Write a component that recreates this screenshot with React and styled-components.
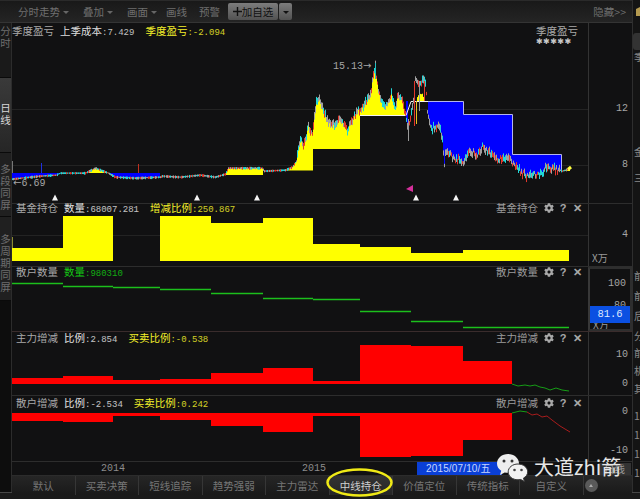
import styled, { createGlobalStyle } from "styled-components";
import { FaCog } from "react-icons/fa";

const CJK = `"Noto Sans CJK SC", "Liberation Sans", sans-serif`;
const MONO = `"Liberation Mono", "Noto Sans CJK SC", monospace`;

const GlobalStyle = createGlobalStyle`
  html, body { margin: 0; padding: 0; background: #111; }
`;

const Page = styled.div`
  position: relative;
  width: 640px;
  height: 499px;
  overflow: hidden;
  display: flex;
  flex-direction: column;
  background: #111112;
  font-family: ${CJK};
  font-size: 10.5px;
  line-height: 12px;
`;

const Toolbar = styled.div`
  flex: 0 0 23px;
  box-sizing: border-box;
  display: flex;
  align-items: center;
  gap: 12px;
  padding: 0 6px 0 18px;
  width: 632px;
  color: #6f6f6f;
  border-top: 1px solid #2a2a2a;
  border-bottom: 1px solid #343434;
  background: linear-gradient(#191919, #242424);
`;

const ToolItem = styled.span`
  display: flex;
  align-items: center;
  margin-left: ${(p) => p.$ml || 0}px;
`;

const Caret = styled.i`
  width: 0;
  height: 0;
  margin: 1px 2px 0 3px;
  border-left: 3px solid transparent;
  border-right: 3px solid transparent;
  border-top: 3px solid ${(p) => p.$color || "#666"};
`;

const AddButton = styled.span`
  width: 50px;
  height: 17px;
  margin-left: -4px;
  display: flex;
  align-items: center;
  justify-content: center;
  font-size: 10.5px;
  color: #111;
  border-radius: 2px;
  background: linear-gradient(#7c7c7c, #525252);
`;

const DropButton = styled(AddButton)`
  width: 13px;
  margin-left: -11px;
`;

const Spacer = styled.span`
  flex: 1;
`;

const Middle = styled.div`
  flex: 1;
  display: flex;
  min-height: 0;
`;

const LeftRail = styled.div`
  flex: 0 0 12px;
  display: flex;
  flex-direction: column;
  border-right: 1px solid #2c2c2c;
  box-sizing: border-box;
  background: #0d0d0d;
`;

const RailTab = styled.div`
  flex: 0 0 ${(p) => p.$h}px;
  box-sizing: border-box;
  width: 11px;
  overflow: hidden;
  display: flex;
  flex-direction: column;
  align-items: center;
  padding-top: ${(p) => p.$pad || 0}px;
  color: ${(p) => (p.$active ? "#d8d8d8" : "#6e6e6e")};
  background: ${(p) => p.$bg || "transparent"};
  border-bottom: 1px solid #0a0a0a;
`;

const Center = styled.div`
  flex: 0 0 620px;
  display: flex;
  flex-direction: column;
`;

const Pane = styled.div`
  flex: 0 0 ${(p) => p.$h}px;
  display: flex;
  box-sizing: border-box;
  border-bottom: 1px solid ${(p) => p.$line || "#2d2d2d"};
`;

const Plot = styled.div`
  position: relative;
  flex: 0 0 576px;
`;

const PlotSvg = styled.svg`
  display: block;
  width: 576px;
  height: 100%;
`;

const Axis = styled.div`
  position: relative;
  flex: 0 0 44px;
  box-sizing: border-box;
  overflow: hidden;
  border: ${(p) => (p.$boxed ? "2px solid #2e2e2e" : "")};
  border-left: ${(p) => (p.$boxed ? "2px solid #383838" : "1px solid #333")};
`;

const Tick = styled.span`
  position: absolute;
  top: ${(p) => p.$y}px;
  right: 4px;
  font-family: ${MONO};
  font-size: 10px;
  color: #a5a5a5;
`;

const Unit = styled.span`
  position: absolute;
  top: ${(p) => p.$y}px;
  left: 3px;
  font-size: 10px;
  color: #9a9a9a;
`;

const Badge = styled.span`
  position: absolute;
  top: ${(p) => p.$y}px;
  left: 0;
  right: 0;
  height: 17px;
  line-height: 17px;
  text-align: center;
  font-family: ${MONO};
  font-size: 10.5px;
  color: #dfe8ff;
  background: #0b50e2;
`;

const Readouts = styled.div`
  position: absolute;
  top: ${(p) => p.$top}px;
  left: ${(p) => p.$left}px;
  display: flex;
  gap: 11px;
  white-space: nowrap;
`;

const Readout = styled.span`
  color: ${(p) => p.$color || "#c4c4c4"};
`;

const Num = styled.span`
  font-family: ${MONO};
  font-size: 9px;
  opacity: 0.85;
`;

const Name = styled(Readout)`
  color: #a9a9a9;
  margin-right: -5px;
`;

const PaneTools = styled.div`
  position: absolute;
  top: ${(p) => p.$top}px;
  right: 4px;
  display: flex;
  align-items: center;
  color: #9c9c9c;
`;

const ToolIcon = styled.span`
  width: 14px;
  display: flex;
  justify-content: center;
  font-family: "Liberation Sans", sans-serif;
  font-size: 11px;
  font-weight: bold;
  color: #a8a8a8;
`;

const ToolName = styled.span`
  margin-right: 4px;
`;

const CornerNote = styled.div`
  position: absolute;
  top: 2px;
  left: 524px;
  color: #a9a9a9;
`;

const Stars = styled.div`
  font-family: "DejaVu Sans", sans-serif;
  font-size: 8px;
  line-height: 9px;
  letter-spacing: 0.4px;
  color: #c8c8c8;
  white-space: nowrap;
`;

const ChartText = styled.span`
  position: absolute;
  left: ${(p) => p.$x}px;
  top: ${(p) => p.$y}px;
  font-family: ${MONO};
  font-size: 10px;
  color: #a6a6a6;
  white-space: nowrap;
`;

const Arrow = styled.span`
  font-family: "DejaVu Sans", sans-serif;
  font-size: 10px;
`;

const DateRow = styled.div`
  position: relative;
  flex: 0 0 14px;
  border-bottom: 1px solid #2c2c2c;
  box-sizing: border-box;
`;

const DateLabel = styled.span`
  position: absolute;
  left: ${(p) => p.$x}px;
  top: 1px;
  font-family: ${MONO};
  font-size: 10px;
  color: #8c8c8c;
`;

const Cursor = styled.span`
  position: absolute;
  left: 405px;
  top: 0;
  width: 85px;
  height: 13px;
  padding-left: 9px;
  box-sizing: border-box;
  line-height: 13px;
  font-family: "Liberation Sans", "Noto Sans CJK SC", sans-serif;
  font-size: 10px;
  letter-spacing: 0.15px;
  color: #c6d6ff;
  background: #0a3fd6;
`;

const PeriodBox = styled.span`
  position: absolute;
  left: 586px;
  top: 1px;
  width: 33px;
  height: 12px;
  text-align: center;
  color: #9a9a9a;
  background: #333;
`;

const TabBar = styled.div`
  position: relative;
  flex: 0 0 19px;
  display: flex;
  align-items: stretch;
  background: linear-gradient(#262626, #191919);
`;

const Tab = styled.div`
  flex: 0 0 63.5px;
  box-sizing: border-box;
  display: flex;
  align-items: center;
  justify-content: center;
  color: ${(p) => (p.$active ? "#cfcfcf" : "#767676")};
  background: ${(p) => (p.$active ? "linear-gradient(#333, #262626)" : "none")};
  border-right: 1px solid #363636;
`;

const TabEnd = styled.div`
  flex: 1;
  display: flex;
  align-items: center;
  padding-left: 1px;
`;

const RoundBtn = styled.span`
  width: 13px;
  height: 13px;
  border-radius: 50%;
  background: #5a5a5a;
  display: flex;
  align-items: center;
  justify-content: center;
`;

const UpCaret = styled.i`
  width: 0;
  height: 0;
  border-left: 2px solid transparent;
  border-right: 2px solid transparent;
  border-bottom: 3px solid #aaa;
`;

const RightRail = styled.div`
  flex: 0 0 8px;
  margin-top: -23px;
  overflow: hidden;
  display: flex;
  flex-direction: column;
  color: #8a8a8a;
  background: #141414;
  border-left: 1px solid #2e2e2e;
`;

const RailIcon = styled.span`
  flex: 0 0 33px;
  box-sizing: border-box;
  padding: 6px 0 0 3px;
`;

const RailPill = styled.span`
  flex: 0 0 17px;
  background: #333;
  border-radius: 3px 0 0 3px;
`;

const RailChars = styled.div`
  flex: 0 0 ${(p) => p.$h}px;
  box-sizing: border-box;
  padding: ${(p) => p.$pad || 0}px 0 0 1px;
  overflow: hidden;
  line-height: ${(p) => p.$lh || 12}px;
  white-space: pre-line;
  width: 24px;
`;

const RailMark = styled.div`
  height: 2px;
  background: #c81414;
`;

const BottomEdge = styled.div`
  flex: 0 0 6px;
  border-top: 1px solid #474747;
  background: #1a1a1a;
`;

const Watermark = styled.div`
  position: absolute;
  left: 496px;
  top: 452px;
  display: flex;
  align-items: center;
  gap: 5px;
  font-size: 20px;
  line-height: 28px;
  color: #e6e6e6;
  white-space: nowrap;
`;

const Ring = styled.svg`
  position: absolute;
  left: 326px;
  top: 468px;
`;

// --- chart data, in page coordinates ---

const PRICE = [
  [12, 178], [40, 175], [56, 174], [60, 172], [85, 172], [95, 167], [103, 170], [108, 172],
  [115, 176], [135, 177], [160, 176], [162, 175], [180, 176], [200, 174], [215, 176], [225, 173],
  [228, 167], [262, 167], [264, 170], [285, 169], [292, 166], [296, 160], [300, 135], [303, 145],
  [308, 125], [312, 130], [316, 100], [319, 95], [322, 105], [327, 118], [335, 123], [340, 117],
  [347, 128], [352, 118], [357, 110], [362, 105], [370, 92], [375, 65], [377, 83], [382, 103],
  [385, 107], [391, 92], [395, 107], [398, 92], [403, 102], [405, 113], [408, 127], [413, 100],
  [415, 80], [425, 80], [427, 110], [431, 128], [438, 122], [442, 137], [444, 163], [445, 150],
  [455, 157], [463, 160], [468, 150], [477, 153], [482, 145], [492, 152], [495, 158], [505, 155],
  [513, 162], [523, 173], [532, 175], [540, 172], [547, 165], [557, 168], [562, 170], [568, 168],
  [570, 167],
];

const STEPS = [
  [160, 172], [263, 174], [313, 169.5], [360, 148], [406, 114], [463, 100], [512, 113], [561, 153], [570, 170],
];

const stepAt = (x) => (STEPS.find((s) => x < s[0]) || STEPS[STEPS.length - 1])[1];

const priceAt = (x) => {
  for (let i = 1; i < PRICE.length; i++) {
    if (x <= PRICE[i][0]) {
      const [x0, y0] = PRICE[i - 1];
      const [x1, y1] = PRICE[i];
      return y0 + ((y1 - y0) * (x - x0)) / (x1 - x0);
    }
  }
  return PRICE[PRICE.length - 1][1];
};

const noise = (x) => {
  const v = Math.sin(x * 12.9898) * 43758.5453;
  return v - Math.floor(v);
};

const buildMain = () => {
  const paths = { yellow: "", blue: "", cyan: "", red: "", gray: "" };
  for (let x = 12; x < 570; x++) {
    const wild = x > 296 && x < 560;
    const p = priceAt(x) + (wild ? (noise(x + 9) - 0.5) * 6 : 0);
    const s = stepAt(x);
    if (x >= 408 && x < 428) {
      // the tall spikes stand on black here, only a thin yellow core
      if (x >= 417 && x < 425) paths.yellow += `M${x + 0.5} ${90 + noise(x) * 8}V100`;
    } else if (x >= 160 && x < 225) {
      // flat stretch, no fill
    } else if (p < s) {
      paths.yellow += `M${x + 0.5} ${p}V${s}`;
    } else {
      paths.blue += `M${x + 0.5} ${s}V${p}`;
    }
    const n = noise(x);
    const len = wild ? 3 + noise(x + 5) * 5 : 1 + noise(x + 5) * 2;
    const key = n < 0.36 ? "cyan" : n < 0.62 ? "red" : "gray";
    paths[key] += `M${x + 0.5} ${p - len * 0.4}V${p + len * 0.6}`;
  }
  return paths;
};

const MAIN = buildMain();

const BLOCKS_FUND = [[12, 63, 247], [63, 113, 215], [160, 211, 215], [211, 263, 222], [263, 313, 217], [313, 360, 243], [360, 411, 246], [411, 463, 252], [463, 569, 249]];
const LINES_RETAIL = [[12, 63, 282], [63, 113, 285], [113, 160, 286], [160, 211, 288], [211, 263, 292], [263, 313, 297], [313, 360, 298], [360, 411, 310], [411, 463, 320], [463, 569, 326]];
const BLOCKS_MAIN = [[12, 63, 377], [63, 113, 375], [113, 160, 379], [160, 211, 378], [211, 263, 372], [263, 313, 367], [313, 360, 380], [360, 411, 344], [411, 463, 345], [463, 512, 360]];
const BLOCKS_RETAIL = [[12, 63, 420], [63, 113, 421], [113, 160, 415], [160, 211, 419], [211, 263, 425], [263, 313, 431], [313, 360, 415], [360, 411, 456], [411, 463, 455], [463, 512, 439]];

const TABS = ["默认", "买卖决策", "短线追踪", "趋势强弱", "主力雷达", "中线持仓", "价值定位", "传统指标", "自定义"];
const MARKERS = [55, 197, 257, 416, 456];

const Grid = ({ ys }) => ys.map((y) => <path key={y} d={`M12 ${y + 0.5}H588`} stroke="#232323" />);

const PaneControls = ({ name, top }) => (
  <PaneTools $top={top}>
    <ToolName>{name}</ToolName>
    <ToolIcon><FaCog size={10} /></ToolIcon>
    <ToolIcon>?</ToolIcon>
    <ToolIcon>✕</ToolIcon>
  </PaneTools>
);

const WeChat = () => (
  <svg width="33" height="30" viewBox="0 0 33 30">
    <path d="M12 2C5.900 2 1 6.200 1 11.400c0 3 1.600 5.600 4.200 7.300L4 23l4.700-2.600c1.100.3 2.200.4 3.300.4 6.100 0 11-4.200 11-9.400S18.100 2 12 2z" fill="#eee" />
    <circle cx="8" cy="9" r="1.500" fill="#333" />
    <circle cx="16" cy="9" r="1.500" fill="#333" />
    <path d="M22 12c-5.500 0-9.800 3.500-9.800 7.900s4.300 7.900 9.800 7.900c.9 0 1.800-.1 2.700-.3l3.800 2-1-3.400c2.500-1.400 4.200-3.600 4.200-6.200 0-4.400-4.300-7.900-9.700-7.900z" fill="#f2f2f2" stroke="#333" />
    <circle cx="18.500" cy="18" r="1.300" fill="#444" />
    <circle cx="25.500" cy="18" r="1.300" fill="#444" />
  </svg>
);

const App = () => {
  return (
    <Page>
      <GlobalStyle />
      <Toolbar>
        <ToolItem>分时走势<Caret /></ToolItem>
        <ToolItem>叠加<Caret /></ToolItem>
        <ToolItem>画面<Caret /></ToolItem>
        <ToolItem $ml={-5}>画线</ToolItem>
        <ToolItem>预警</ToolItem>
        <AddButton>
          <svg width="9" height="9" viewBox="0 0 9 9"><path d="M4.500 0V9M0 4.500H9" stroke="#111" strokeWidth="1.400" /></svg>
          加自选
        </AddButton>
        <DropButton><Caret $color="#111" /></DropButton>
        <Spacer />
        <ToolItem>隐藏&gt;&gt;</ToolItem>
      </Toolbar>

      <Middle>
        <LeftRail>
          <RailTab $h={55} $pad={2} $bg="#1a1a1a">分<br />时</RailTab>
          <RailTab $h={75} $pad={24} $active $bg="linear-gradient(#3a3a3a, #262626)">日<br />线</RailTab>
          <RailTab $h={64} $pad={10} $bg="#202020">多<br />段<br />同<br />屏</RailTab>
          <RailTab $h={84} $pad={16} $bg="#202020">多<br />周<br />期<br />同<br />屏</RailTab>
        </LeftRail>

        <Center>
          <Pane $h={181}>
            <Plot>
              <PlotSvg viewBox="12 22 576 180">
                <Grid ys={[108, 164]} />
                <path d={MAIN.yellow} stroke="#ffff00" />
                <path d={MAIN.blue} stroke="#0000ff" />
                <path d="M360 114.500H406L411 100.500H428" fill="none" stroke="#f2f2f2" strokeWidth="1" />
                <path d="M428 100.500H463.500V113.500H512.500V153.500H561.500V170" fill="none" stroke="#b4b4ee" strokeWidth="1" />
                <path d={MAIN.gray} stroke="#a0a0a0" />
                <path d={MAIN.cyan} stroke="#22d6d6" />
                <path d={MAIN.red} stroke="#e2372c" />
                <path d="M12.500 160V172" stroke="#777" />
                <path d="M41.500 162V172" stroke="#2030e0" />
                <path d="M138.500 163V172" stroke="#c03020" />
                <path d="M414.500 80V125M424.500 80V100" stroke="#e2372c" />
                <path d="M416.500 100V123" stroke="#e8c020" />
                <path d="M419.500 80V110M408.500 118V140" stroke="#999" />
                <path d="M375.500 62V78" stroke="#22c0c0" />
                <path d="M568 168.500L571 166" stroke="#ffff40" strokeWidth="3" />
                {MARKERS.map((x) => (
                  <path key={x} d={`M${x} 193.500L${x + 3} 199.500H${x - 3}Z`} fill="#f4f4f4" />
                ))}
                <path d="M413 184V191L406 188Z" fill="#d6309c" />
              </PlotSvg>
              <Readouts $top={2} $left={0}>
                <Name>季度盈亏</Name>
                <Readout $color="#dedede">上季成本<Num>:7.429</Num></Readout>
                <Readout $color="#f4f02a">季度盈亏<Num>:-2.094</Num></Readout>
              </Readouts>
              <CornerNote>
                季度盈亏
                <Stars>✱✱✱✱✱</Stars>
              </CornerNote>
              <ChartText $x={321} $y={37}>15.13<Arrow>→</Arrow></ChartText>
              <ChartText $x={1} $y={154}><Arrow>←</Arrow>6.69</ChartText>
            </Plot>
            <Axis>
              <Tick $y={80}>12</Tick>
              <Tick $y={136}>8</Tick>
            </Axis>
          </Pane>

          <Pane $h={63}>
            <Plot>
              <PlotSvg viewBox="12 203 576 62">
                <Grid ys={[234]} />
                {BLOCKS_FUND.map(([a, b, y]) => (
                  <rect key={a} x={a} y={y} width={b - a} height={260 - y} fill="#ffff00" />
                ))}
                <path d="M12.500 236V247" stroke="#8a8a30" />
              </PlotSvg>
              <Readouts $top={-2} $left={4}>
                <Name>基金持仓</Name>
                <Readout $color="#e2e2e2">数量<Num>:68007.281</Num></Readout>
                <Readout $color="#f4f02a">增减比例<Num>:250.867</Num></Readout>
              </Readouts>
              <PaneControls name="基金持仓" top={-2} />
            </Plot>
            <Axis>
              <Tick $y={25}>4</Tick>
              <Unit $y={48}>X万</Unit>
            </Axis>
          </Pane>

          <Pane $h={65} $line="#3a2c2c">
            <Plot>
              <PlotSvg viewBox="12 266 576 64">
                {LINES_RETAIL.map(([a, b, y]) => (
                  <path key={a} d={`M${a} ${y + 0.5}H${b}`} stroke="#1cc01c" strokeWidth="1.500" />
                ))}
              </PlotSvg>
              <Readouts $top={-1} $left={4}>
                <Name>散户数量</Name>
                <Readout $color="#14c814">数量<Num>:980310</Num></Readout>
              </Readouts>
              <PaneControls name="散户数量" top={-1} />
            </Plot>
            <Axis $boxed>
              <Tick $y={9}>100</Tick>
              <Tick $y={31}>80</Tick>
              <Unit $y={50}>X万</Unit>
              <Badge $y={37}>81.6</Badge>
            </Axis>
          </Pane>

          <Pane $h={64}>
            <Plot>
              <PlotSvg viewBox="12 331 576 63">
                {BLOCKS_MAIN.map(([a, b, y]) => (
                  <rect key={a} x={a} y={y} width={b - a} height={383 - y} fill="#ff0000" />
                ))}
                <path d="M512 383L518 385L525 384L530 385L535 384L540 386L545 387L550 389L556 387L562 389L569 390" fill="none" stroke="#169c16" />
              </PlotSvg>
              <Readouts $top={0} $left={4}>
                <Name>主力增减</Name>
                <Readout $color="#e2e2e2">比例<Num>:2.854</Num></Readout>
                <Readout $color="#f4f02a">买卖比例<Num>:-0.538</Num></Readout>
              </Readouts>
              <PaneControls name="主力增减" top={0} />
            </Plot>
            <Axis>
              <Tick $y={17}>10</Tick>
              <Tick $y={46}>0</Tick>
            </Axis>
          </Pane>

          <Pane $h={66}>
            <Plot>
              <PlotSvg viewBox="12 395 576 65">
                {BLOCKS_RETAIL.map(([a, b, y]) => (
                  <rect key={a} x={a} y={412} width={b - a} height={y - 412} fill="#ff0000" />
                ))}
                <path d="M512 412L520 410L527 411" fill="none" stroke="#169c16" />
                <path d="M527 411L532 414L537 413L542 416L547 415L552 419L560 425L570 431" fill="none" stroke="#a81c1c" />
              </PlotSvg>
              <Readouts $top={1} $left={4}>
                <Name>散户增减</Name>
                <Readout $color="#e2e2e2">比例<Num>:-2.534</Num></Readout>
                <Readout $color="#f4f02a">买卖比例<Num>:0.242</Num></Readout>
              </Readouts>
              <PaneControls name="散户增减" top={1} />
            </Plot>
            <Axis>
              <Tick $y={10}>0</Tick>
              <Tick $y={49}>-10</Tick>
            </Axis>
          </Pane>

          <DateRow>
            <DateLabel $x={89}>2014</DateLabel>
            <DateLabel $x={290}>2015</DateLabel>
            <Cursor>2015/07/10/五</Cursor>
            <PeriodBox>日线</PeriodBox>
          </DateRow>

          <TabBar>
            {TABS.map((t) => (
              <Tab key={t} $active={t === "中线持仓"}>{t}</Tab>
            ))}
            <TabEnd>
              <RoundBtn><UpCaret /></RoundBtn>
            </TabEnd>
          </TabBar>
        </Center>

        <RightRail>
          <RailIcon>
            <svg width="6" height="10" viewBox="0 0 6 10"><path d="M0 10V3L6 0V10Z" fill="#b49a50" /></svg>
          </RailIcon>
          <RailPill />
          <RailChars $h={12} $lh={12} $pad={1}>季</RailChars>
          <RailChars $h={82} />
          <RailChars $h={26} $pad={2}>{"金\n"}</RailChars>
          <RailMark />
          <RailChars $h={82} $pad={2}>三</RailChars>
          <RailChars $h={90} $pad={14} $lh={20}>{"前\n前\n后\n分"}</RailChars>
          <RailChars $h={60} $pad={2} $lh={18}>{"前\n机\n其"}</RailChars>
          <RailChars $h={90} $pad={4} $lh={19}>{"1\n1\n1\n1"}</RailChars>
        </RightRail>
      </Middle>

      <BottomEdge />

      <Ring width="68" height="30" viewBox="0 0 68 30">
        <ellipse cx="33.500" cy="14.500" rx="32" ry="13" fill="none" stroke="#f0ea16" strokeWidth="2.500" />
      </Ring>

      <Watermark>
        <WeChat />
        <span>大道zhi箭</span>
      </Watermark>
    </Page>
  );
};

export default App;
